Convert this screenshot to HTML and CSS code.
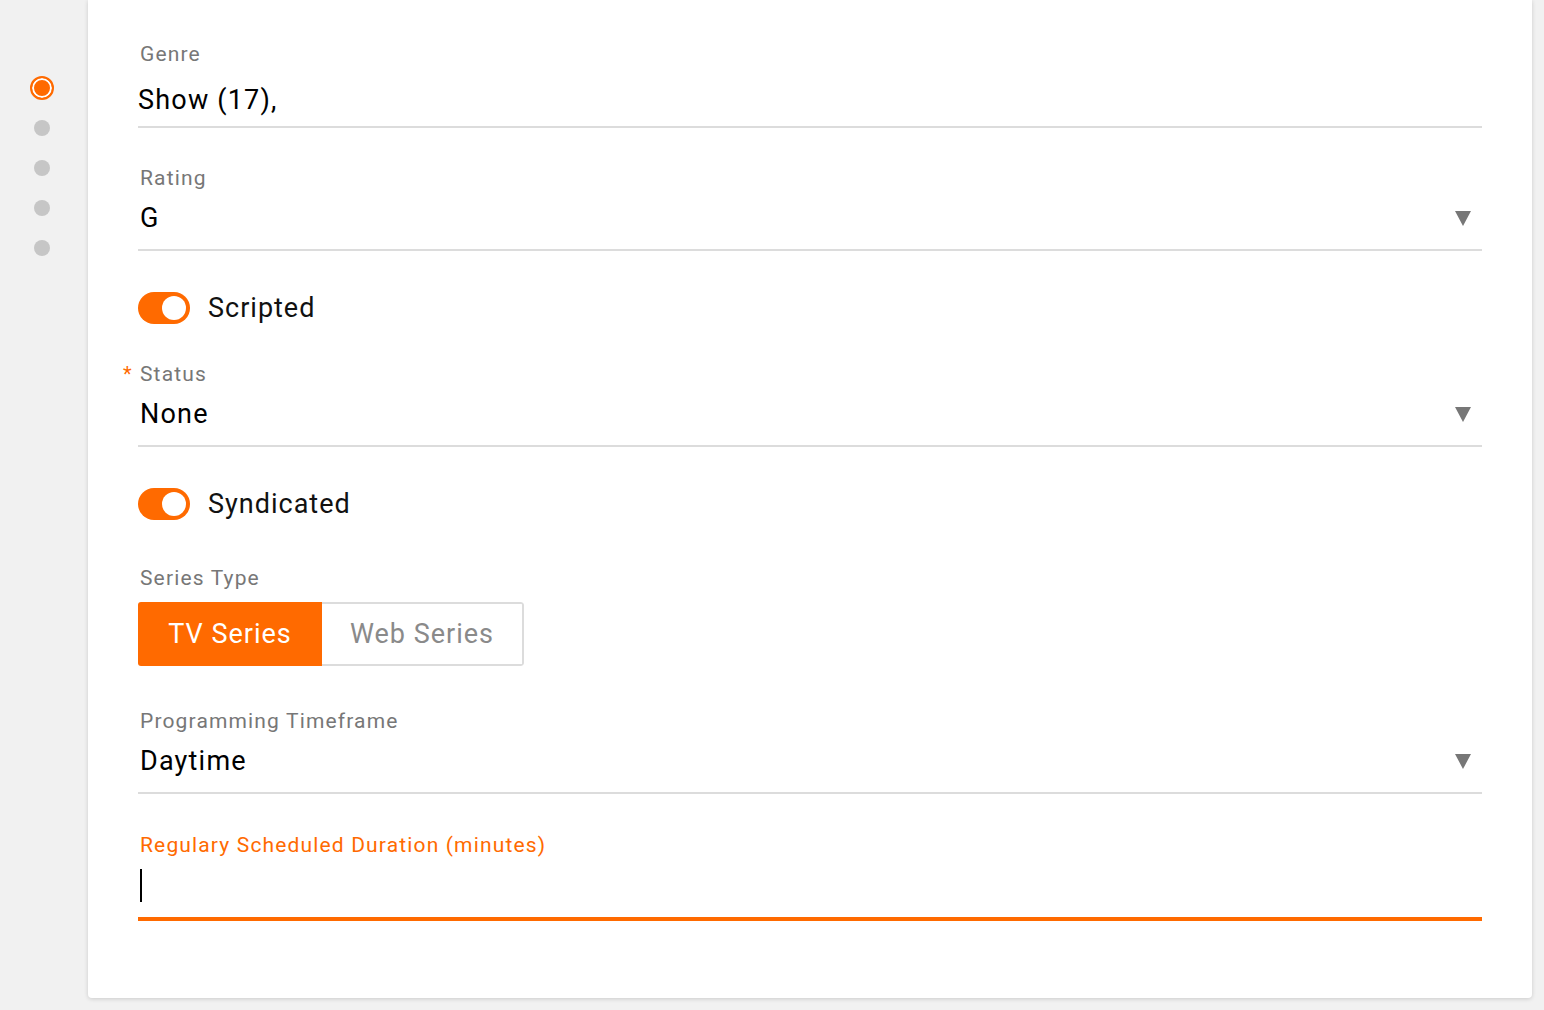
FILE: index.html
```html
<!DOCTYPE html>
<html>
<head>
<meta charset="utf-8">
<link rel="stylesheet" href="styles.css">
</head>
<body>
<div class="page">
  <nav class="steps">
    <span class="step active"></span>
    <span class="step"></span>
    <span class="step"></span>
    <span class="step"></span>
    <span class="step"></span>
  </nav>
  <main class="card">
    <div class="field genre">
      <div class="label">Genre</div>
      <div class="value">Show (17),</div>
    </div>

    <div class="field select rating">
      <div class="label">Rating</div>
      <div class="value"><span>G</span><span class="caret"></span></div>
    </div>

    <div class="toggle-row first">
      <span class="switch"><span class="knob"></span></span>
      <span class="toggle-text">Scripted</span>
    </div>

    <div class="field select status">
      <div class="label"><span class="req">*</span>Status</div>
      <div class="value"><span>None</span><span class="caret"></span></div>
    </div>

    <div class="toggle-row second">
      <span class="switch"><span class="knob"></span></span>
      <span class="toggle-text">Syndicated</span>
    </div>

    <div class="field series">
      <div class="label">Series Type</div>
      <div class="btn-group">
        <span class="btn on">TV Series</span>
        <span class="btn off">Web Series</span>
      </div>
    </div>

    <div class="field select timeframe">
      <div class="label">Programming Timeframe</div>
      <div class="value"><span>Daytime</span><span class="caret"></span></div>
    </div>

    <div class="field focused">
      <div class="label">Regulary Scheduled Duration (minutes)</div>
      <div class="input"><span class="cursor"></span></div>
    </div>
  </main>
</div>
</body>
</html>
```

FILE: styles.css
```css
* { box-sizing: border-box; }
html, body {
  margin: 0;
  padding: 0;
  background: #f1f1f1;
  font-family: Roboto, "Liberation Sans", sans-serif;
}
.page {
  display: flex;
  align-items: flex-start;
  height: 1010px;
}
.steps {
  width: 88px;
  flex: none;
  display: flex;
  flex-direction: column;
  align-items: center;
  padding-top: 68px;
  padding-right: 4px;
}
.step {
  width: 16px;
  height: 16px;
  border-radius: 50%;
  background: #c6c6c6;
  margin: 12px 0;
}
.step.active {
  width: 24px;
  height: 24px;
  margin: 8px 0;
  background: #ff6a00;
  border: 2px solid #ff6a00;
  box-shadow: inset 0 0 0 2px #fff;
}
.card {
  flex: 1;
  margin-right: 12px;
  background: #fff;
  border-radius: 0 0 4px 4px;
  box-shadow: 0 1px 4px rgba(0,0,0,0.16);
  padding: 42px 50px 77px 50px;
}
.label {
  font-size: 21px;
  line-height: 24px;
  color: #777;
  padding-left: 2px;
  letter-spacing: 1.15px;
}
.value {
  font-size: 27px;
  line-height: 32px;
  color: #000;
  display: flex;
  justify-content: space-between;
  align-items: center;
  padding-left: 2px;
  letter-spacing: 1.2px;
}
.field { border-bottom: 2px solid #dcdcdc; }
.genre .value { margin-top: 18px; padding-bottom: 10px; padding-left: 0; }
.select .value { margin-top: 12px; padding-bottom: 15px; }
.rating { margin-top: 38px; }
.status { margin-top: 38px; }
.timeframe { margin-top: 43px; }
.caret {
  width: 0;
  height: 0;
  border-left: 8px solid transparent;
  border-right: 8px solid transparent;
  border-top: 15px solid #777;
  margin-right: 11px;
}
.req {
  display: inline-block;
  width: 10px;
  color: #ff6a00;
  margin-left: -17px;
  margin-right: 7px;
  font-size: 20px;
  letter-spacing: 0;
}
.toggle-row {
  display: flex;
  align-items: center;
  height: 32px;
}
.toggle-row.first { margin-top: 41px; }
.toggle-row.second { margin-top: 41px; }
.switch {
  width: 52px;
  height: 32px;
  border-radius: 16px;
  background: #ff6a00;
  display: flex;
  align-items: center;
  justify-content: flex-end;
  padding-right: 4px;
}
.knob {
  width: 24px;
  height: 24px;
  border-radius: 50%;
  background: #fff;
}
.toggle-text {
  margin-left: 18px;
  font-size: 27px;
  color: #111;
  letter-spacing: 1px;
}
.series {
  border-bottom: none;
  margin-top: 46px;
}
.btn-group {
  margin-top: 12px;
  display: inline-flex;
  height: 64px;
  border-radius: 3px;
  overflow: hidden;
}
.btn {
  display: flex;
  align-items: center;
  font-size: 27px;
  height: 64px;
  letter-spacing: 1px;
}
.btn.on {
  background: #ff6a00;
  color: #fff;
  width: 184px;
  justify-content: center;
}
.btn.off {
  width: 202px;
  border: 2px solid #dcdcdc;
  border-left: none;
  border-radius: 0 3px 3px 0;
  color: #8a8a8a;
  justify-content: center;
}
.focused {
  margin-top: 39px;
  border-bottom: 4px solid #ff6a00;
}
.focused .label { color: #ff6a00; }
.input {
  height: 60px;
  padding-top: 12px;
  padding-left: 2px;
}
.cursor {
  display: block;
  width: 2px;
  height: 33px;
  background: #000;
}
```
